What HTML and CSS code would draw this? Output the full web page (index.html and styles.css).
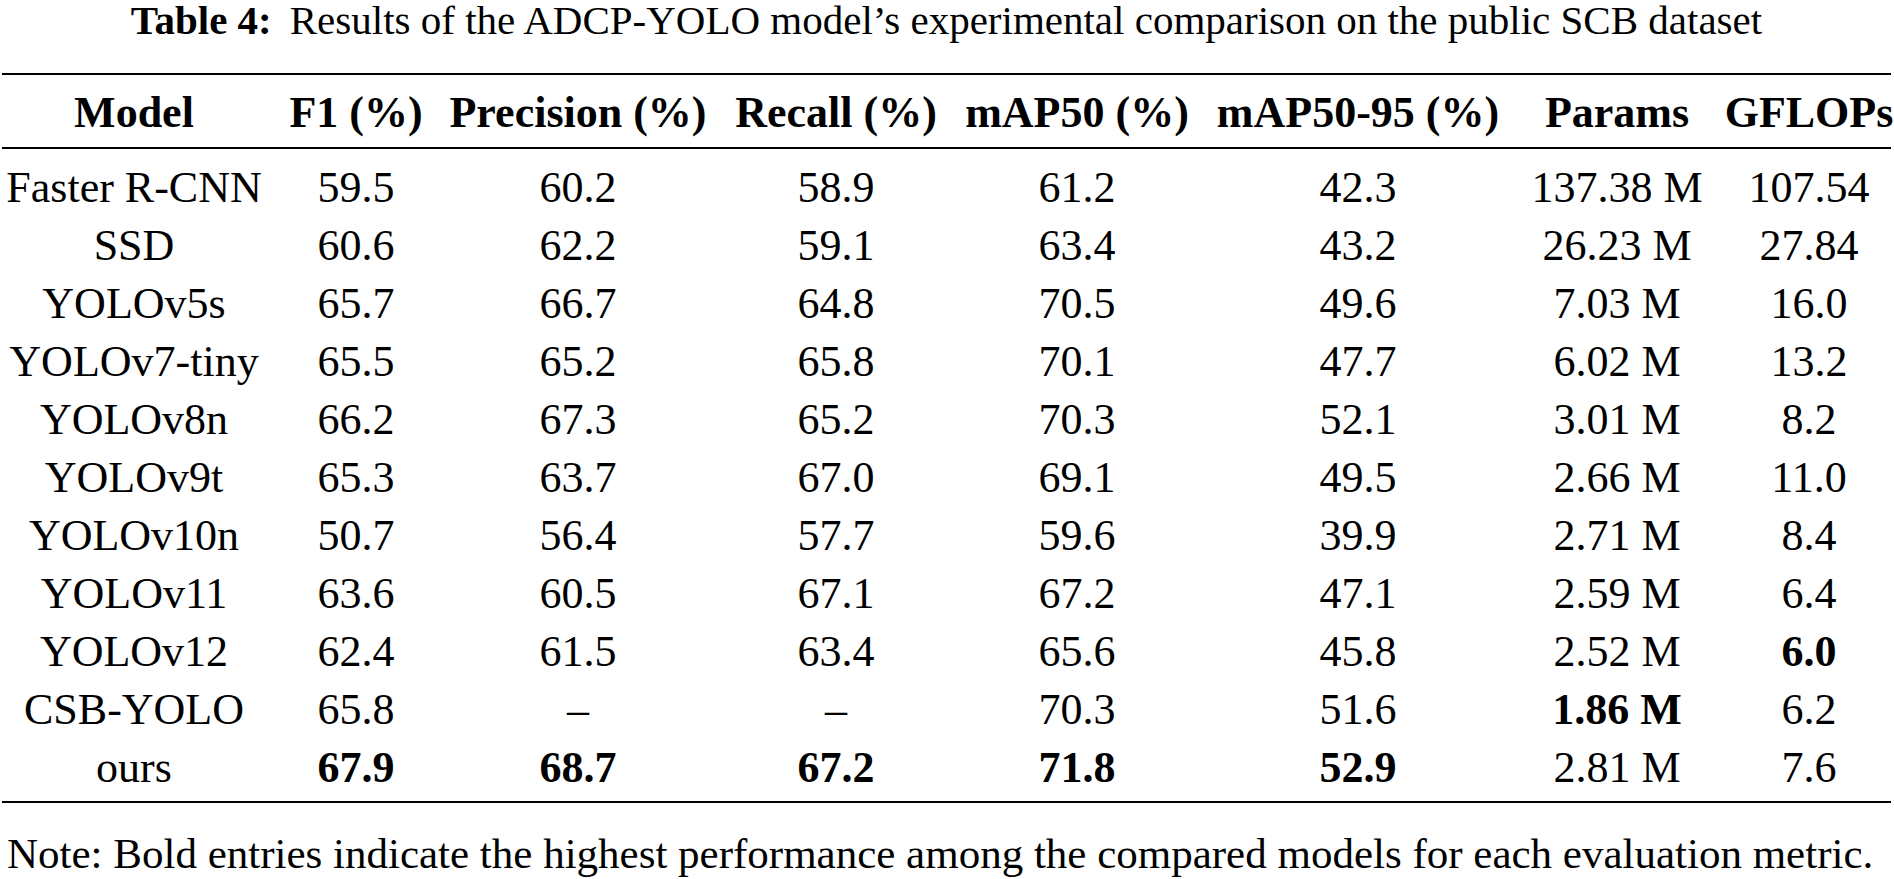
FILE: index.html
```html
<!DOCTYPE html>
<html lang="en">
<head>
<meta charset="utf-8">
<title>Table 4</title>
<link rel="stylesheet" href="styles.css">
</head>
<body>
<div class="page">
  <p class="caption"><span class="cap-label">Table 4:</span>Results of the ADCP-YOLO model’s experimental comparison on the public SCB dataset</p>
  <div class="table">
    <div class="row head">
      <div class="cell">Model</div>
      <div class="cell">F1 (%)</div>
      <div class="cell">Precision (%)</div>
      <div class="cell">Recall (%)</div>
      <div class="cell">mAP50 (%)</div>
      <div class="cell">mAP50-95 (%)</div>
      <div class="cell">Params</div>
      <div class="cell last">GFLOPs</div>
    </div>
    <div class="body">
      <div class="row"><div class="cell">Faster R-CNN</div><div class="cell">59.5</div><div class="cell">60.2</div><div class="cell">58.9</div><div class="cell">61.2</div><div class="cell">42.3</div><div class="cell">137.38 M</div><div class="cell last">107.54</div></div>
      <div class="row"><div class="cell">SSD</div><div class="cell">60.6</div><div class="cell">62.2</div><div class="cell">59.1</div><div class="cell">63.4</div><div class="cell">43.2</div><div class="cell">26.23 M</div><div class="cell last">27.84</div></div>
      <div class="row"><div class="cell">YOLOv5s</div><div class="cell">65.7</div><div class="cell">66.7</div><div class="cell">64.8</div><div class="cell">70.5</div><div class="cell">49.6</div><div class="cell">7.03 M</div><div class="cell last">16.0</div></div>
      <div class="row"><div class="cell">YOLOv7-tiny</div><div class="cell">65.5</div><div class="cell">65.2</div><div class="cell">65.8</div><div class="cell">70.1</div><div class="cell">47.7</div><div class="cell">6.02 M</div><div class="cell last">13.2</div></div>
      <div class="row"><div class="cell">YOLOv8n</div><div class="cell">66.2</div><div class="cell">67.3</div><div class="cell">65.2</div><div class="cell">70.3</div><div class="cell">52.1</div><div class="cell">3.01 M</div><div class="cell last">8.2</div></div>
      <div class="row"><div class="cell">YOLOv9t</div><div class="cell">65.3</div><div class="cell">63.7</div><div class="cell">67.0</div><div class="cell">69.1</div><div class="cell">49.5</div><div class="cell">2.66 M</div><div class="cell last">11.0</div></div>
      <div class="row"><div class="cell">YOLOv10n</div><div class="cell">50.7</div><div class="cell">56.4</div><div class="cell">57.7</div><div class="cell">59.6</div><div class="cell">39.9</div><div class="cell">2.71 M</div><div class="cell last">8.4</div></div>
      <div class="row"><div class="cell">YOLOv11</div><div class="cell">63.6</div><div class="cell">60.5</div><div class="cell">67.1</div><div class="cell">67.2</div><div class="cell">47.1</div><div class="cell">2.59 M</div><div class="cell last">6.4</div></div>
      <div class="row"><div class="cell">YOLOv12</div><div class="cell">62.4</div><div class="cell">61.5</div><div class="cell">63.4</div><div class="cell">65.6</div><div class="cell">45.8</div><div class="cell">2.52 M</div><div class="cell last best">6.0</div></div>
      <div class="row"><div class="cell">CSB-YOLO</div><div class="cell">65.8</div><div class="cell">–</div><div class="cell">–</div><div class="cell">70.3</div><div class="cell">51.6</div><div class="cell best">1.86 M</div><div class="cell last">6.2</div></div>
      <div class="row"><div class="cell">ours</div><div class="cell best">67.9</div><div class="cell best">68.7</div><div class="cell best">67.2</div><div class="cell best">71.8</div><div class="cell best">52.9</div><div class="cell">2.81 M</div><div class="cell last">7.6</div></div>
    </div>
  </div>
  <p class="note">Note: Bold entries indicate the highest performance among the compared models for each evaluation metric.</p>
</div>
</body>
</html>
```

FILE: styles.css
```css
html, body {
  margin: 0;
  padding: 0;
  background: #ffffff;
}

body {
  font-family: "Liberation Serif", "Times New Roman", serif;
  color: #000000;
}

.page {
  width: 1889px;
  margin-left: 2px;
}

.caption {
  margin: 0;
  font-size: 41px;
  line-height: 40px;
  text-align: center;
  white-space: nowrap;
}

.cap-label {
  font-weight: bold;
  margin-right: 18px;
}

.table {
  margin-top: 33px;
  border-top: 2px solid #000;
  border-bottom: 2px solid #000;
}

.row {
  display: grid;
  grid-template-columns: 264px 180px 264px 252px 230px 332px 186px 181px;
  font-size: 44px;
  line-height: 58px;
}

.row.head {
  font-weight: bold;
  line-height: 68px;
  padding-top: 4px;
  border-bottom: 2px solid #000;
}

.body {
  padding-top: 10px;
  padding-bottom: 4px;
}

.cell {
  display: flex;
  justify-content: center;
  white-space: nowrap;
  min-width: 0;
}

.cell.last {
  padding-left: 17px;
}

.best {
  font-weight: bold;
}

.note {
  margin: 27px 0 0 5px;
  font-size: 43px;
  line-height: 48px;
  white-space: nowrap;
}
```
